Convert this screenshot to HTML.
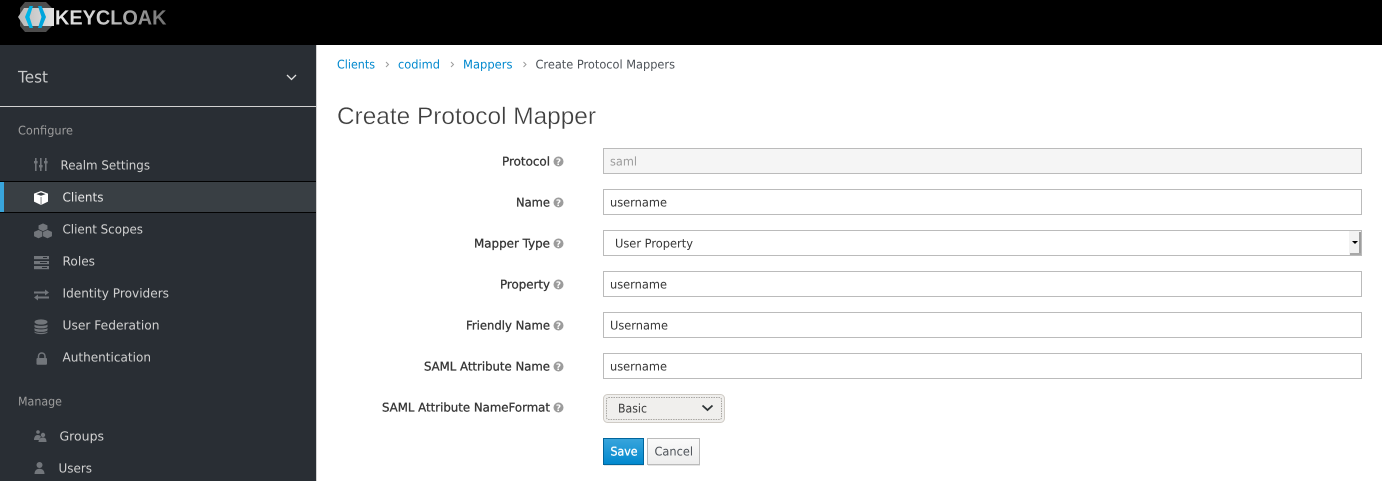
<!DOCTYPE html>
<html lang="en">
<head>
<meta charset="utf-8">
<title>Create Protocol Mapper</title>
<style>
html,body{margin:0;padding:0;background:#fff;width:1382px;height:481px;overflow:hidden}
svg{display:block}
text{font-family:"DejaVu Sans","Liberation Sans",sans-serif;font-size:12px;text-rendering:geometricPrecision}
.nav{fill:#d1d1d1;font-size:12.5px}
.sec{fill:#9c9c9c;font-size:12px}
.lbl{fill:#363636;font-size:12px;stroke:#363636;stroke-width:.3px}
.val{fill:#363636;font-size:12px}
.lnk{fill:#0088ce;font-size:12px}
.inp{fill:#fff;stroke:#bbb;stroke-width:1}
.hq{fill:#fff;font-size:9px;font-weight:bold;text-anchor:middle}
</style>
</head>
<body>
<svg width="1382" height="481" viewBox="0 0 1382 481" xmlns="http://www.w3.org/2000/svg">
<defs>
<linearGradient id="lg" x1="0" x2="1" y1="0" y2="0"><stop offset="0" stop-color="#e6e6e6"/><stop offset=".4" stop-color="#cfcfcf"/><stop offset="1" stop-color="#6f6f6f"/></linearGradient>
<linearGradient id="hex" x1="0" x2="1" y1="0" y2="0"><stop offset="0" stop-color="#b9b9b9"/><stop offset="1" stop-color="#e2e2e2"/></linearGradient>
<linearGradient id="sv" x1="0" x2="0" y1="0" y2="1"><stop offset="0" stop-color="#39a5dc"/><stop offset="1" stop-color="#0088ce"/></linearGradient>
<linearGradient id="cn" x1="0" x2="0" y1="0" y2="1"><stop offset="0" stop-color="#fafafa"/><stop offset="1" stop-color="#ededed"/></linearGradient>
</defs>

<!-- Header -->
<rect x="0" y="0" width="1382" height="45" fill="#000"/>
<polygon points="25,2 46,2 52,8 52,26 46,32 25,32 20,26 20,8" fill="#4d4d4d"/>
<polygon points="18,17 24,8 54,8 54,26 24,26" fill="url(#hex)"/>
<polygon points="33,6 29.500,6 25,17 29.500,28 33,28 29.500,17" fill="#00b4e6"/>
<polygon points="38,6 41.500,6 46,17 41.500,28 38,28 41.500,17" fill="#00a5dc"/>
<text x="55" y="24.500" textLength="111.500" lengthAdjust="spacingAndGlyphs" style="font-family:'Liberation Sans',sans-serif;font-size:20.500px;font-weight:bold" fill="url(#lg)">KEYCLOAK</text>

<!-- Sidebar -->
<rect x="0" y="45" width="316" height="436" fill="#292e34"/>
<rect x="316" y="45" width="1" height="436" fill="#d1d1d1"/>
<text x="18" y="82.500" textLength="30" lengthAdjust="spacingAndGlyphs" style="font-size:16px" fill="#c8c9ca">Test</text>
<path d="M287 75l4.500 4.500 4.500-4.500" fill="none" stroke="#e0e0e0" stroke-width="1.300"/>
<rect x="0" y="106" width="316" height="1" fill="#d1d1d1"/>

<text class="sec" x="18" y="134.500" textLength="55" lengthAdjust="spacingAndGlyphs">Configure</text>

<rect x="0" y="181" width="316" height="32" fill="#393f44"/>
<rect x="0" y="181" width="316" height="1" fill="#030303"/>
<rect x="0" y="212" width="316" height="1" fill="#030303"/>
<rect x="0" y="182" width="4" height="30" fill="#39a5dc"/>

<text class="nav" x="60.500" y="169.500" textLength="89.500" lengthAdjust="spacingAndGlyphs">Realm Settings</text>
<text class="nav" x="62.500" y="201.500" textLength="41" lengthAdjust="spacingAndGlyphs" style="fill:#e6e6e6">Clients</text>
<text class="nav" x="62.500" y="233.500" textLength="80.500" lengthAdjust="spacingAndGlyphs">Client Scopes</text>
<text class="nav" x="62.500" y="265.500" textLength="32.500" lengthAdjust="spacingAndGlyphs">Roles</text>
<text class="nav" x="62.500" y="297.500" textLength="106.500" lengthAdjust="spacingAndGlyphs">Identity Providers</text>
<text class="nav" x="62.500" y="329.500" textLength="97" lengthAdjust="spacingAndGlyphs">User Federation</text>
<text class="nav" x="62.500" y="361.500" textLength="88.500" lengthAdjust="spacingAndGlyphs">Authentication</text>
<text class="sec" x="18" y="405.500" textLength="44" lengthAdjust="spacingAndGlyphs">Manage</text>
<text class="nav" x="59.500" y="440.500" textLength="44.500" lengthAdjust="spacingAndGlyphs">Groups</text>
<text class="nav" x="58.500" y="472.500" textLength="33.500" lengthAdjust="spacingAndGlyphs">Users</text>

<!-- Realm settings icon -->
<g fill="#72767b">
<rect x="35" y="158" width="1.600" height="13"/><rect x="40" y="158" width="1.600" height="13"/><rect x="45" y="158" width="1.600" height="13"/>
<rect x="34" y="161" width="3.600" height="2.400"/><rect x="39" y="165" width="3.600" height="2.400"/><rect x="44" y="161" width="3.600" height="2.400"/>
</g>
<!-- Clients cube -->
<path d="M41 191l7 2.600v8l-7 3.400-7-3.400v-8z" fill="#fff"/>
<path d="M41 192.400l4.600 1.700-4.600 1.700-4.600-1.700z" fill="#393f44"/>
<path d="M41.600 197v7.500l-1.100 0v-7.500z" fill="#393f44" opacity=".6"/>
<!-- Client scopes cubes -->
<g fill="#72767b" stroke="#292e34" stroke-width=".7">
<path d="M43 223l4.800 2.200v4.600l-4.800 2.200-4.800-2.200v-4.600z"/>
<path d="M38.500 229.500l4.800 2.200v4.800l-4.800 2.200-4.800-2.200v-4.800z"/>
<path d="M47.500 229.500l4.800 2.200v4.800l-4.800 2.200-4.800-2.200v-4.800z"/>
</g>
<!-- Roles -->
<g fill="#72767b">
<rect x="34" y="256" width="15" height="3.200"/><rect x="34" y="261" width="15" height="3.200"/><rect x="34" y="266" width="15" height="3.200"/>
</g>
<g fill="#292e34"><rect x="43" y="257" width="4" height="1"/><rect x="40" y="262" width="7" height="1"/><rect x="42" y="267" width="5" height="1"/></g>
<!-- Identity providers -->
<g fill="#72767b">
<rect x="34" y="291.500" width="12" height="2"/><path d="M45 289.500l4 3-4 3z"/>
<rect x="37" y="296.500" width="12" height="2"/><path d="M38 294.500l-4 3 4 3z"/>
</g>
<!-- User federation -->
<g fill="#72767b">
<ellipse cx="41" cy="322" rx="6.500" ry="2.600"/>
<path d="M34.500 324.500c1 1.800 12 1.800 13 0v2.200c-1 2.300-12 2.300-13 0z"/>
<path d="M34.500 328c1 1.800 12 1.800 13 0v2.200c-1 2.300-12 2.300-13 0z"/>
<path d="M34.500 331.500c1 1.800 12 1.800 13 0v0.900c-1 2.300-12 2.300-13 0z"/>
</g>
<!-- Lock -->
<rect x="36.500" y="358" width="10.500" height="6.800" rx="1" fill="#72767b"/>
<path d="M38.500 358v-1.800a3.200 3.200 0 0 1 6.500 0V358" fill="none" stroke="#72767b" stroke-width="1.500"/>
<!-- Groups -->
<g fill="#72767b">
<circle cx="38" cy="432" r="1.800"/><path d="M34 440c0-3 1.500-5 3.500-5s3 .8 3.500 2c-1 .8-1.600 1.800-1.800 3z"/>
<circle cx="43" cy="435" r="2.200"/><path d="M38.500 442c0-2.800 2-4.500 4.500-4.500s3.500 1.500 3.500 4.500z"/>
</g>
<!-- Users -->
<g fill="#72767b">
<circle cx="39.500" cy="465" r="3"/><path d="M34.500 474c0-3.500 2-5.300 5-5.300s5 1.800 5 5.300z"/>
</g>

<!-- Breadcrumb -->
<text class="lnk" x="337" y="68.500" textLength="38" lengthAdjust="spacingAndGlyphs">Clients</text>
<path d="M386 62l2.500 2.500-2.500 2.500" fill="none" stroke="#9c9c9c"/>
<text class="lnk" x="398" y="68.500" textLength="42" lengthAdjust="spacingAndGlyphs">codimd</text>
<path d="M451 62l2.500 2.500-2.500 2.500" fill="none" stroke="#9c9c9c"/>
<text class="lnk" x="463" y="68.500" textLength="49.500" lengthAdjust="spacingAndGlyphs">Mappers</text>
<path d="M523.500 62l2.500 2.500-2.500 2.500" fill="none" stroke="#9c9c9c"/>
<text x="535.500" y="68.500" textLength="139.500" lengthAdjust="spacingAndGlyphs" fill="#4d5258">Create Protocol Mappers</text>

<!-- Title -->
<text x="337" y="124" textLength="259" lengthAdjust="spacingAndGlyphs" style="font-size:24px;font-family:'Liberation Sans',sans-serif;stroke:#fff;stroke-width:.35px" fill="#3f3f3f">Create Protocol Mapper</text>

<!-- Labels -->
<text class="lbl" x="502" y="165.500" textLength="48" lengthAdjust="spacingAndGlyphs">Protocol</text>
<text class="lbl" x="516" y="206.500" textLength="34" lengthAdjust="spacingAndGlyphs">Name</text>
<text class="lbl" x="474" y="247.500" textLength="76" lengthAdjust="spacingAndGlyphs">Mapper Type</text>
<text class="lbl" x="500" y="288.500" textLength="50" lengthAdjust="spacingAndGlyphs">Property</text>
<text class="lbl" x="466" y="329.500" textLength="84" lengthAdjust="spacingAndGlyphs">Friendly Name</text>
<text class="lbl" x="424" y="370.500" textLength="126" lengthAdjust="spacingAndGlyphs">SAML Attribute Name</text>
<text class="lbl" x="382" y="411.500" textLength="168" lengthAdjust="spacingAndGlyphs">SAML Attribute NameFormat</text>

<!-- Help icons -->
<g fill="#9c9c9c">
<circle cx="558.500" cy="161.500" r="5"/><circle cx="558.500" cy="202.500" r="5"/><circle cx="558.500" cy="243.500" r="5"/>
<circle cx="558.500" cy="284.500" r="5"/><circle cx="558.500" cy="325.500" r="5"/><circle cx="558.500" cy="366.500" r="5"/><circle cx="558.500" cy="407.500" r="5"/>
</g>
<text class="hq" x="558.500" y="165">?</text><text class="hq" x="558.500" y="206">?</text><text class="hq" x="558.500" y="247">?</text>
<text class="hq" x="558.500" y="288">?</text><text class="hq" x="558.500" y="329">?</text><text class="hq" x="558.500" y="370">?</text><text class="hq" x="558.500" y="411">?</text>

<!-- Inputs -->
<rect x="603.500" y="148.500" width="758" height="25" fill="#f5f5f5" stroke="#bbb"/>
<text x="610" y="165.500" textLength="27" lengthAdjust="spacingAndGlyphs" fill="#9c9c9c">saml</text>
<rect class="inp" x="603.500" y="189.500" width="758" height="25"/>
<text class="val" x="610" y="206.500" textLength="57" lengthAdjust="spacingAndGlyphs">username</text>
<rect class="inp" x="603.500" y="230.500" width="758" height="25"/>
<text class="val" x="615" y="247.500" textLength="78" lengthAdjust="spacingAndGlyphs">User Property</text>
<rect x="1349" y="231" width="12" height="24" fill="#f2f2f2"/>
<rect x="1359" y="232" width="2" height="23" fill="#9e9e9e"/>
<rect x="1350" y="253" width="11" height="2" fill="#a8a8a8"/>
<path d="M1352 241h6l-3 3z" fill="#000"/>
<rect class="inp" x="603.500" y="271.500" width="758" height="25"/>
<text class="val" x="610" y="288.500" textLength="57" lengthAdjust="spacingAndGlyphs">username</text>
<rect class="inp" x="603.500" y="312.500" width="758" height="25"/>
<text class="val" x="610" y="329.500" textLength="58" lengthAdjust="spacingAndGlyphs">Username</text>
<rect class="inp" x="603.500" y="353.500" width="758" height="25"/>
<text class="val" x="610" y="370.500" textLength="57" lengthAdjust="spacingAndGlyphs">username</text>

<!-- NameFormat select -->
<rect x="603.500" y="394.500" width="121" height="28" rx="4" fill="#f0efed" stroke="#cfcbc5"/>
<rect x="606.500" y="397.500" width="115" height="22" rx="2" fill="#f0efed" stroke="#a8a6a2" stroke-dasharray="1.500 1"/>
<text x="618" y="412.500" textLength="29" lengthAdjust="spacingAndGlyphs" fill="#3a3a3a">Basic</text>
<path d="M702.500 405.500l5 4.500 5-4.500" fill="none" stroke="#2e3436" stroke-width="1.800"/>

<!-- Buttons -->
<rect x="648" y="440" width="52" height="26" fill="#000" opacity=".1"/>
<rect x="604" y="440" width="40" height="26" fill="#000" opacity=".1"/>
<rect x="603.500" y="438.500" width="40" height="26" fill="url(#sv)" stroke="#00659c"/>
<text x="610.500" y="455.500" textLength="27" lengthAdjust="spacingAndGlyphs" fill="#fff" style="stroke:#fff;stroke-width:.3px">Save</text>
<rect x="647.500" y="438.500" width="52" height="26" fill="url(#cn)" stroke="#bbb"/>
<text x="654.500" y="455.500" textLength="38.500" lengthAdjust="spacingAndGlyphs" fill="#4d5258">Cancel</text>
</svg>
</body>
</html>
